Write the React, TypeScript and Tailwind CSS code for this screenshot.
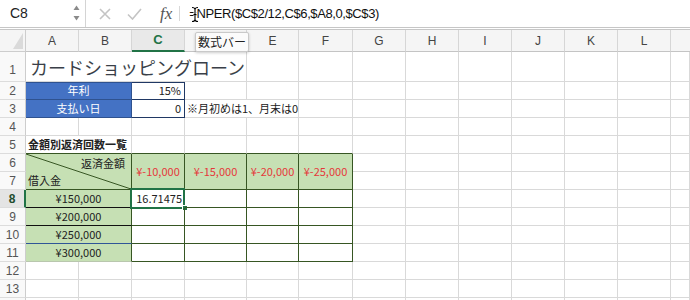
import React from "react";

const jp = "font-['Noto_Sans_CJK_JP',sans-serif]";
const ui = "font-['Liberation_Sans',Arial,sans-serif]";
const grid = "border-r border-b border-[#d9d9d9]";
const dark = "border-[#375623]";
const restCols = ["G", "H", "I", "J", "K", "L"];

const RowHead = ({ n, active = false }: { n?: number; active?: boolean }) => (
  <div
    className={`h-[18px] w-[26px] shrink-0 flex items-center justify-center border-b border-[#dcdcdc] text-[12px] ${ui} ${
      active
        ? "border-r-2 border-r-[#217346] bg-[#e4e4e4] font-bold text-[#1e4d2e]"
        : "border-r border-r-[#cdcdcd] bg-[#f9f9f9] text-[#555]"
    }`}
  >
    {n}
  </div>
);

const Rest = () => (
  <>
    {restCols.map((c) => (
      <div key={c} className={`w-[53px] shrink-0 ${grid}`} />
    ))}
    <div className={`flex-1 ${grid}`} />
  </>
);

const RestDouble = () => (
  <>
    {restCols.map((c) => (
      <div key={c} className="w-[53px] shrink-0 flex flex-col">
        <div className={`h-[18px] ${grid}`} />
        <div className={`h-[18px] ${grid}`} />
      </div>
    ))}
    <div className="flex-1 flex flex-col">
      <div className={`h-[18px] ${grid}`} />
      <div className={`h-[18px] ${grid}`} />
    </div>
  </>
);

const TopBar = () => (
  <div className="relative flex h-[30px] border-b-[3px] border-double border-[#c6c6c6] bg-white">
    <div className="w-[86px] shrink-0 flex items-center border-r border-[#d4d4d4] pl-[10px] pr-[5px]">
      <span className={`text-[14px] text-[#222] ${ui}`}>C8</span>
      <svg className="ml-auto" width="7" height="17" viewBox="0 0 7 17">
        <path d="M3.5 0.5 L6.5 5 L0.5 5 Z" fill="#8a8a8a" />
        <path d="M0.5 11 L6.5 11 L3.5 15.5 Z" fill="#8a8a8a" />
      </svg>
    </div>
    <div className="flex items-center">
      <svg className="ml-[13px]" width="12" height="12" viewBox="0 0 12 12">
        <path d="M1 1 L11 11 M11 1 L1 11" stroke="#c4c4c4" strokeWidth="1.6" />
      </svg>
      <svg className="ml-[16px]" width="15" height="12" viewBox="0 0 15 12">
        <path d="M1 6.5 L5.5 11 L14 1" stroke="#c4c4c4" strokeWidth="1.6" fill="none" />
      </svg>
      <span className="ml-[18px] text-[17px] italic text-[#555] font-['Liberation_Serif',serif] leading-none">fx</span>
      <div className="ml-[7px] w-px h-[15px] bg-[#d8d8d8]" />
      <span className={`ml-[9px] text-[13px] tracking-[-0.4px] text-[#111] ${ui}`}>
        =NPER($C$2/12,C$6,$A8,0,$C$3)
      </span>
    </div>
    <svg className="absolute left-[191px] top-[6px]" width="8" height="17" viewBox="0 0 8 17">
      <path
        d="M1 1.5 C3 1.5 4 2 4 3.5 C4 2 5 1.5 7 1.5 M4 3.5 L4 13.5 M1 15.5 C3 15.5 4 15 4 13.5 C4 15 5 15.5 7 15.5 M2.5 8.5 L5.5 8.5"
        stroke="#fff"
        strokeWidth="3"
        fill="none"
      />
      <path
        d="M1 1.5 C3 1.5 4 2 4 3.5 C4 2 5 1.5 7 1.5 M4 3.5 L4 13.5 M1 15.5 C3 15.5 4 15 4 13.5 C4 15 5 15.5 7 15.5 M2.5 8.5 L5.5 8.5"
        stroke="#000"
        strokeWidth="1.1"
        fill="none"
      />
    </svg>
  </div>
);

const colHeads: { l: string; w: string }[] = [
  { l: "A", w: "w-[53px]" },
  { l: "B", w: "w-[53px]" },
  { l: "C", w: "w-[53px]" },
  { l: "", w: "w-[62px]" },
  { l: "E", w: "w-[52px]" },
  { l: "F", w: "w-[54px]" },
  { l: "G", w: "w-[53px]" },
  { l: "H", w: "w-[53px]" },
  { l: "I", w: "w-[53px]" },
  { l: "J", w: "w-[53px]" },
  { l: "K", w: "w-[53px]" },
  { l: "L", w: "w-[53px]" },
];

const HeaderRow = () => (
  <div className={`flex h-[22px] bg-[#f5f5f5] text-[12px] text-[#444] ${ui}`}>
    <div className="w-[26px] shrink-0 flex items-end justify-end border-r border-b border-[#cdcdcd] pr-[2px] pb-[2px]">
      <svg width="10" height="16" viewBox="0 0 10 16">
        <path d="M10 0 L10 16 L0 16 Z" fill="#dadada" />
      </svg>
    </div>
    {colHeads.map((c, i) =>
      c.l === "C" ? (
        <div
          key={i}
          className={`${c.w} shrink-0 flex items-center justify-center border-r border-r-[#d6d6d6] border-b-2 border-b-[#217346] bg-[#e9e9e9] font-bold text-[#217346] text-[13px]`}
        >
          {c.l}
        </div>
      ) : (
        <div key={i} className={`${c.w} shrink-0 flex items-center justify-center border-r border-b border-[#d6d6d6] border-b-[#c4c4c4]`}>
          {c.l}
        </div>
      )
    )}
    <div className="flex-1 border-b border-[#c4c4c4]" />
  </div>
);

const loans = [
  { n: 8, v: "¥150,000", b: "border-b-[#111]" },
  { n: 9, v: "¥200,000", b: "border-b-[#111]" },
  { n: 10, v: "¥250,000", b: "border-b-[#2f5597]" },
  { n: 11, v: "¥300,000", b: "border-b-[#b9c7ae]" },
];
const pays = [
  { v: "¥-10,000", w: "w-[53px]" },
  { v: "¥-15,000", w: "w-[62px]" },
  { v: "¥-20,000", w: "w-[52px]" },
  { v: "¥-25,000", w: "w-[54px]" },
];

export default function App() {
  return (
    <div className={`relative w-[690px] h-[300px] overflow-hidden bg-white text-[11px] text-[#222] ${jp}`}>
      <TopBar />
      <HeaderRow />

      {/* row 1 */}
      <div className="flex h-[30px]">
        <div className={`h-[30px] w-[26px] shrink-0 flex items-end justify-center pb-[2px] border-b border-[#dcdcdc] border-r border-r-[#cdcdcd] bg-[#f9f9f9] text-[12px] text-[#555] ${ui}`}>
          1
        </div>
        <div className={`w-[221px] shrink-0 flex items-center pl-[4px] pt-[1px] ${grid}`}>
          <span className="text-[18px] text-[#3a3f48] whitespace-nowrap">カードショッピングローン</span>
        </div>
        <div className={`w-[52px] shrink-0 ${grid}`} />
        <div className={`w-[54px] shrink-0 ${grid}`} />
        <Rest />
      </div>

      {/* row 2 */}
      <div className="flex h-[18px]">
        <RowHead n={2} />
        <div className="w-[106px] shrink-0 flex items-center justify-center border-r border-b border-[#2f528f] bg-[#4472c4] text-white shadow-[inset_0_1px_0_#2f528f]">
          年利
        </div>
        <div className="w-[53px] shrink-0 flex items-center justify-end pr-[3px] border-r border-b border-[#203864] shadow-[inset_0_1px_0_#203864]">
          15%
        </div>
        <div className={`w-[62px] shrink-0 ${grid}`} />
        <div className={`w-[52px] shrink-0 ${grid}`} />
        <div className={`w-[54px] shrink-0 ${grid}`} />
        <Rest />
      </div>

      {/* row 3 */}
      <div className="flex h-[18px]">
        <RowHead n={3} />
        <div className="w-[106px] shrink-0 flex items-center justify-center border-r border-b border-[#2f528f] bg-[#4472c4] text-white">
          支払い日
        </div>
        <div className="w-[53px] shrink-0 flex items-center justify-end pr-[3px] border-r border-b border-[#203864]">0</div>
        <div className={`w-[114px] shrink-0 flex items-center pl-[2px] whitespace-nowrap ${grid}`}>※月初めは1、月末は0</div>
        <div className={`w-[54px] shrink-0 ${grid}`} />
        <Rest />
      </div>

      {/* row 4 */}
      <div className="flex h-[18px]">
        <RowHead n={4} />
        <div className={`w-[53px] shrink-0 ${grid}`} />
        <div className={`w-[53px] shrink-0 ${grid}`} />
        <div className={`w-[53px] shrink-0 ${grid}`} />
        <div className={`w-[62px] shrink-0 ${grid}`} />
        <div className={`w-[52px] shrink-0 ${grid}`} />
        <div className={`w-[54px] shrink-0 ${grid}`} />
        <Rest />
      </div>

      {/* row 5 */}
      <div className="flex h-[18px]">
        <RowHead n={5} />
        <div className="w-[106px] shrink-0 flex items-center pl-[2px] font-bold whitespace-nowrap border-r border-[#d9d9d9] border-b border-b-[#375623]">
          金額別返済回数一覧
        </div>
        <div className="w-[53px] shrink-0 border-r border-[#d9d9d9] border-b border-b-[#375623]" />
        <div className="w-[62px] shrink-0 border-r border-[#d9d9d9] border-b border-b-[#375623]" />
        <div className="w-[52px] shrink-0 border-r border-[#d9d9d9] border-b border-b-[#375623]" />
        <div className="w-[54px] shrink-0 border-r border-[#d9d9d9] border-b border-b-[#375623]" />
        <Rest />
      </div>

      {/* rows 6-7 */}
      <div className="flex h-[36px]">
        <div className="flex flex-col">
          <RowHead n={6} />
          <RowHead n={7} />
        </div>
        <div className={`relative w-[106px] shrink-0 flex flex-col bg-[#c6e0b4] border-r border-b ${dark}`}>
          <svg className="absolute inset-0 w-full h-full" preserveAspectRatio="none" viewBox="0 0 105 35">
            <line x1="0" y1="0" x2="105" y2="35" stroke="#375623" strokeWidth="1" vectorEffect="non-scaling-stroke" />
          </svg>
          <div className="relative h-[18px] flex items-center justify-end pr-[6px]">返済金額</div>
          <div className="relative h-[17px] flex items-center pl-[2px]">借入金</div>
        </div>
        {pays.map((p) => (
          <div key={p.v} className={`${p.w} shrink-0 flex items-center justify-center bg-[#c6e0b4] text-[#e5383b] border-r border-b ${dark}`}>
            {p.v}
          </div>
        ))}
        <RestDouble />
      </div>

      {/* rows 8-11 */}
      {loans.map((r) => (
        <div key={r.n} className="flex h-[18px]">
          <RowHead n={r.n} active={r.n === 8} />
          <div className={`w-[106px] shrink-0 flex items-center justify-center bg-[#c6e0b4] border-r border-b ${dark} ${r.b}`}>{r.v}</div>
          {pays.map((p, i) => (
            <div key={p.v} className={`relative ${p.w} shrink-0 flex items-center justify-end pr-[2px] border-r border-b ${dark}`}>
              {r.n === 8 && i === 0 && (
                <>
                  16.71475
                  <div className="absolute left-[-2px] top-[-2px] w-[55px] h-[21px] border-2 border-[#217346]" />
                  <div className="absolute right-[-4px] bottom-[-4px] w-[6px] h-[6px] bg-[#217346] border border-white" />
                </>
              )}
            </div>
          ))}
          <Rest />
        </div>
      ))}

      {/* rows 12-14 */}
      {[12, 13, 0].map((n) => (
        <div key={n} className="flex h-[18px]">
          <RowHead n={n || undefined} />
          <div className={`w-[53px] shrink-0 ${grid}`} />
          <div className={`w-[53px] shrink-0 ${grid}`} />
          <div className={`w-[53px] shrink-0 ${grid}`} />
          <div className={`w-[62px] shrink-0 ${grid}`} />
          <div className={`w-[52px] shrink-0 ${grid}`} />
          <div className={`w-[54px] shrink-0 ${grid}`} />
          <Rest />
        </div>
      ))}

      {/* tooltip */}
      <div className="absolute left-[195px] top-[32px] w-[54px] h-[20px] flex items-center justify-center bg-[#fbfbfb] border border-[#c9c9c9] rounded-[2px] shadow-[0_1px_3px_rgba(0,0,0,0.2)] text-[12px] text-[#222]">
        数式バー
      </div>
    </div>
  );
}
